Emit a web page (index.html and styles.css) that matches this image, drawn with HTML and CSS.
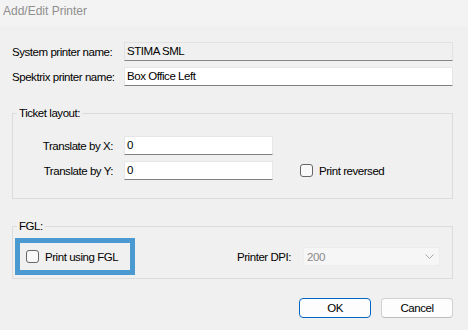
FILE: index.html
```html
<!DOCTYPE html>
<html>
<head>
<meta charset="utf-8">
<link rel="stylesheet" href="styles.css">
</head>
<body>
<div class="window">
  <div class="titlebar">Add/Edit Printer</div>
  <div class="content">
    <div class="row row-first">
      <label class="lbl lbl-top">System printer name:</label>
      <div class="input input-wide input-disabled">STIMA SML</div>
    </div>
    <div class="row row-second">
      <label class="lbl lbl-top">Spektrix printer name:</label>
      <div class="input input-wide">Box Office Left</div>
    </div>

    <fieldset class="group group-ticket">
      <legend>Ticket layout:</legend>
      <div class="row">
        <label class="lbl lbl-inner">Translate by X:</label>
        <div class="input input-small">0</div>
      </div>
      <div class="row row-second">
        <label class="lbl lbl-inner">Translate by Y:</label>
        <div class="input input-small">0</div>
        <div class="check check-reversed">
          <span class="box"></span>
          <span>Print reversed</span>
        </div>
      </div>
    </fieldset>

    <fieldset class="group group-fgl">
      <legend>FGL:</legend>
      <div class="fgl-row">
        <div class="highlight">
          <div class="check">
            <span class="box"></span>
            <span>Print using FGL</span>
          </div>
        </div>
        <label class="dpi-lbl">Printer DPI:</label>
        <div class="select">
          <span>200</span>
          <svg class="chev" width="9" height="5" viewBox="0 0 9 5"><path d="M0.5 0.5 L4.5 4.5 L8.5 0.5" fill="none" stroke="#a8a8a8" stroke-width="1"/></svg>
        </div>
      </div>
    </fieldset>

    <div class="buttons">
      <button class="btn btn-default">OK</button>
      <button class="btn">Cancel</button>
    </div>
  </div>
</div>
</body>
</html>
```

FILE: styles.css
```css
* { box-sizing: border-box; }
html, body {
  margin: 0;
  padding: 0;
  background: #f0f0f0;
}
body {
  font-family: "Liberation Sans", Arial, sans-serif;
  font-size: 11.5px;
  letter-spacing: -0.45px;
  color: #000;
}
.window {
  width: 468px;
  height: 330px;
  overflow: hidden;
}
.titlebar {
  height: 26px;
  background: #f3f3f3;
  color: #8f8f8f;
  font-size: 12px;
  letter-spacing: 0;
  line-height: 14px;
  padding: 4px 0 0 3px;
}
.content {
  padding: 0 15px 0 12px;
}
.row {
  display: flex;
  align-items: center;
  height: 19px;
}
.row-first { margin-top: 16px; }
.row-second { margin-top: 6px; }
.lbl {
  text-align: right;
  white-space: nowrap;
}
.lbl-top { width: 99px; margin-right: 13px; }
.lbl-inner { width: 98px; margin-right: 11px; }
.input {
  height: 19px;
  line-height: 17px;
  padding-left: 2px;
  background: #fff;
  border: 1px solid #e6e6e6;
  border-bottom: 1px solid #808080;
  white-space: nowrap;
}
.input-wide { width: 329px; }
.input-small { width: 149px; }
.input-disabled { background: #f0f0f0; border-color: #e2e2e2; border-bottom-color: #858585; }

.group {
  margin: 0;
  padding: 0 0 0 2px;
  border: 1px solid #dcdcdc;
  min-width: 0;
}
.group legend {
  padding: 0 2px;
  margin-left: 2px;
  line-height: 13px;
}
.group-ticket {
  margin-top: 21px;
  padding-top: 16px;
  padding-bottom: 18px;
}
.group-fgl {
  margin-top: 21px;
  padding-top: 5px;
  padding-bottom: 3px;
}
.check {
  display: flex;
  align-items: center;
  white-space: nowrap;
}
.check .box {
  width: 13px;
  height: 13px;
  border: 1px solid #666;
  border-radius: 3px;
  background: #f9f9f9;
  margin-right: 6px;
  flex: none;
}
.check-reversed { margin-left: 27px; }

.fgl-row {
  display: flex;
  align-items: center;
}
.highlight {
  width: 120px;
  height: 37px;
  border: 5px solid #4a9ad1;
  padding-left: 6px;
  display: flex;
  align-items: center;
}
.dpi-lbl {
  margin-left: 102px;
  margin-right: 12px;
  white-space: nowrap;
}
.select {
  width: 137px;
  height: 19px;
  background: #f6f6f6;
  border: 1px solid #ececec;
  border-radius: 2px;
  color: #8a8a8a;
  display: flex;
  align-items: center;
  justify-content: space-between;
  padding: 0 5px 0 3px;
}
.chev { display: block; }

.buttons {
  display: flex;
  justify-content: flex-end;
  gap: 10px;
  margin-top: 19px;
}
.btn {
  width: 72px;
  height: 20px;
  font-family: "Liberation Sans", Arial, sans-serif;
  font-size: 11.5px;
  letter-spacing: -0.45px;
  color: #000;
  background: #fdfdfd;
  border: 1px solid #d0d0d0;
  border-bottom-color: #bdbdbd;
  border-radius: 4px;
  padding: 0;
}
.btn-default {
  border: 1px solid #0067c0;
}
```
